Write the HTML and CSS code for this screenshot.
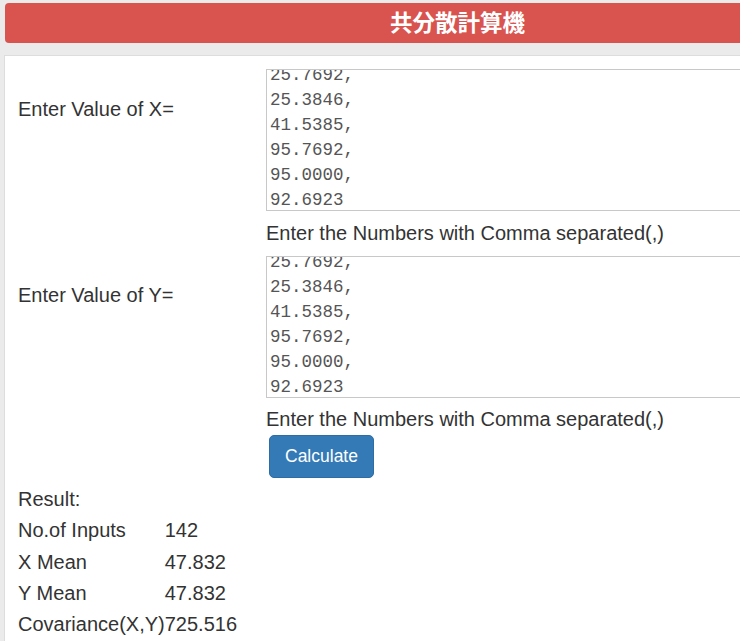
FILE: index.html
```html
<!DOCTYPE html>
<html lang="ja">
<head>
<meta charset="utf-8">
<title>共分散計算機</title>
<link rel="stylesheet" href="styles.css">
</head>
<body>
<div class="page">
  <div class="title-bar"><h1 class="title">共分散計算機</h1></div>
  <div class="panel">
    <div class="form-row">
      <label class="field-label" for="xs">Enter Value of X=</label>
      <div class="field">
        <textarea id="xs" class="numbers" rows="6">12.3077,
18.4615,
33.0769,
47.6923,
60.0000,
25.7692,
25.3846,
41.5385,
95.7692,
95.0000,
92.6923</textarea>
        <p class="help">Enter the Numbers with Comma separated(,)</p>
      </div>
    </div>
    <div class="form-row">
      <label class="field-label field-label-y" for="ys">Enter Value of Y=</label>
      <div class="field">
        <textarea id="ys" class="numbers" rows="6">12.3077,
18.4615,
33.0769,
47.6923,
60.0000,
25.7692,
25.3846,
41.5385,
95.7692,
95.0000,
92.6923</textarea>
        <p class="help help-last">Enter the Numbers with Comma separated(,)</p>
        <button class="btn-calc" type="button">Calculate</button>
      </div>
    </div>
    <div class="result">
      <div class="result-title">Result:</div>
      <table class="result-table">
        <tr><td>No.of Inputs</td><td>142</td></tr>
        <tr><td>X Mean</td><td>47.832</td></tr>
        <tr><td>Y Mean</td><td>47.832</td></tr>
        <tr><td>Covariance(X,Y)</td><td>725.516</td></tr>
      </table>
    </div>
  </div>
</div>
<script src="script.js"></script>
</body>
</html>
```

FILE: styles.css
```css
html, body {
  margin: 0;
  padding: 0;
  overflow: hidden;
  background: #ebebeb;
}
body {
  font-family: "Liberation Sans", Arial, sans-serif;
  color: #333;
}
.page {
  width: 906px;
  padding: 3px 0 0 4px;
}
.title-bar {
  margin-left: 1px;
  height: 40px;
  padding-bottom: 3px;
  box-sizing: border-box;
  background: #d9534f;
  border-radius: 4px;
  display: flex;
  align-items: center;
  justify-content: center;
}
.title {
  margin: 0;
  color: #fff;
  font-family: "Noto Sans CJK JP", "Noto Sans", sans-serif;
  font-weight: 700;
  font-size: 22.5px;
  line-height: 1;
}
.panel {
  margin-top: 12px;
  background: #fff;
  border: 1px solid #ddd;
  border-right: none;
  padding: 13px 0 20px 13px;
  min-height: 600px;
}
.form-row {
  display: grid;
  grid-template-columns: 248px 1fr;
}
.field-label {
  font-size: 20px;
  line-height: 25px;
  padding-top: 28px;
}
.field-label-y {
  padding-top: 27px;
}
.field {
  display: flex;
  flex-direction: column;
  align-items: flex-start;
}
.numbers {
  box-sizing: border-box;
  width: 100%;
  height: 142px;
  margin: 0;
  padding: 0 3px;
  border: 1px solid #c8c8c8;
  font-family: "Liberation Mono", "Courier New", monospace;
  font-size: 17.5px;
  line-height: 25px;
  color: #555;
  resize: none;
  background: #fff;
}
.help {
  margin: 10px 0 10px;
  font-size: 20px;
  line-height: 25px;
}
.help-last {
  margin-top: 9px;
  margin-bottom: 3px;
}
.btn-calc {
  margin-left: 3px;
  height: 43px;
  padding: 0 15px;
  background: #337ab7;
  border: 1px solid #2e6da4;
  border-radius: 5px;
  color: #fff;
  font-family: "Liberation Sans", Arial, sans-serif;
  font-size: 17.5px;
  line-height: 25px;
}
.result {
  margin-top: 6px;
  font-size: 20px;
  line-height: 31.25px;
}
.result-table {
  border-collapse: collapse;
  font-size: 20px;
}
.result-table td {
  padding: 0;
  line-height: 31.25px;
}
```

FILE: script.js
```js
document.querySelectorAll('textarea.numbers').forEach(function (t) {
  t.scrollTop = t.scrollHeight - t.clientHeight - 3;
});
```
